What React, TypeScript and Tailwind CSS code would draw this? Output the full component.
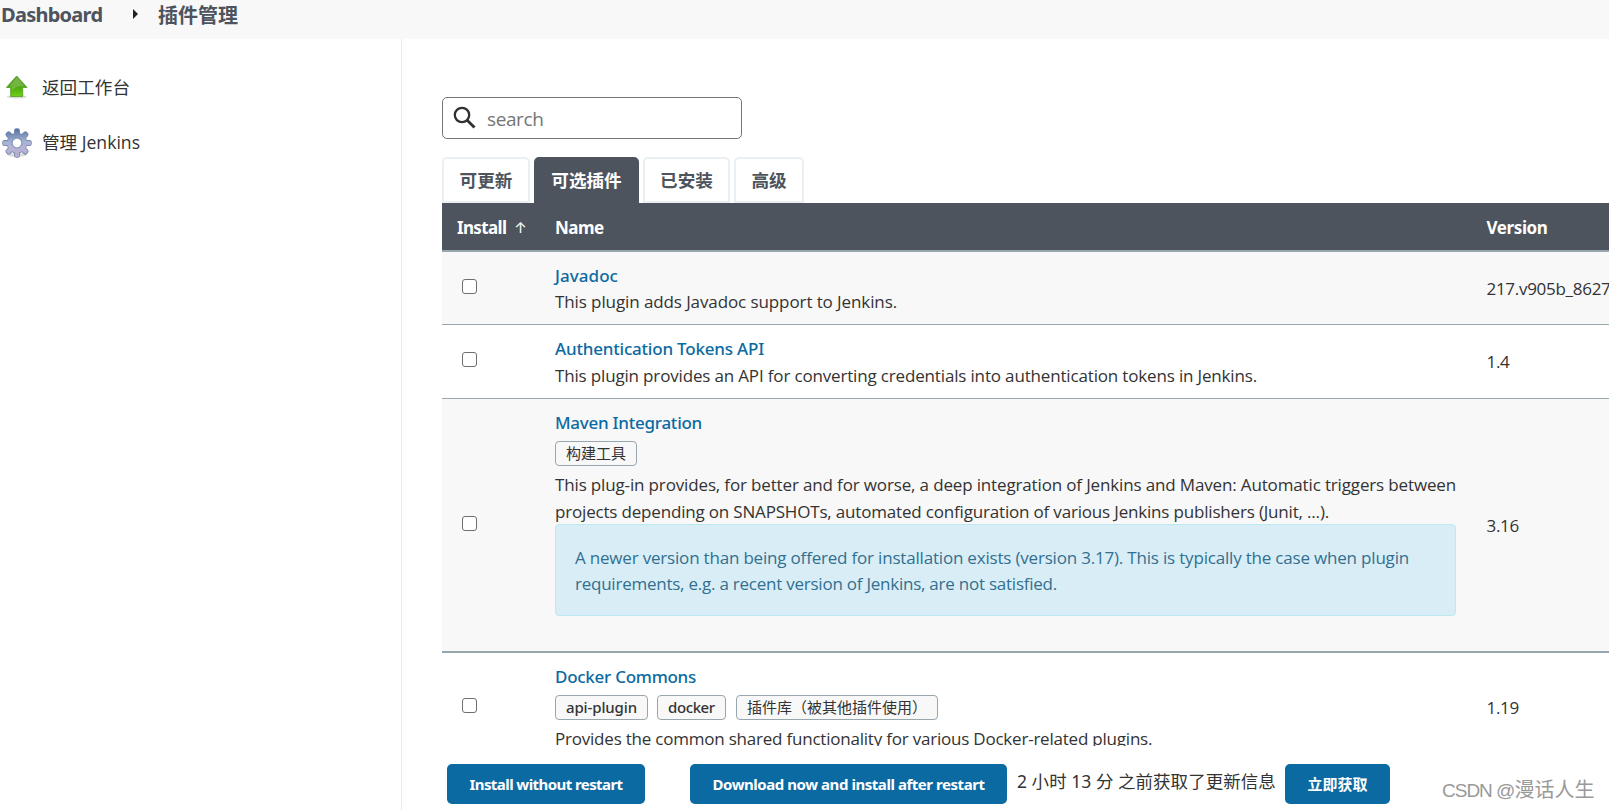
import type { ReactNode } from 'react';

interface Plugin {
  name: string;
  nameClass: string;
  rowClass: string;
  version: string;
  labels?: { text: string; className: string }[];
  description: ReactNode;
  notice?: ReactNode;
}

const tabs = [
  { label: '可更新', className: 'w-[88px]' },
  { label: '可选插件', className: 'w-[105px]', active: true },
  { label: '已安装', className: 'w-[87px]' },
  { label: '高级', className: 'w-[70px]' },
];

const plugins: Plugin[] = [
  {
    name: 'Javadoc',
    nameClass: 'tracking-[0.05px]',
    rowClass: 'h-[73px] border-b bg-[#f8f8f8]',
    version: '217.v905b_8627',
    description: (
      <p className="tracking-[-0.1px]">This plugin adds Javadoc support to Jenkins.</p>
    ),
  },
  {
    name: 'Authentication Tokens API',
    nameClass: 'tracking-[-0.2px] mb-px',
    rowClass: 'h-[74px] border-b bg-white',
    version: '1.4',
    description: (
      <p className="tracking-[-0.163px]">
        This plugin provides an API for converting credentials into authentication tokens in Jenkins.
      </p>
    ),
  },
  {
    name: 'Maven Integration',
    nameClass: 'tracking-[-0.255px]',
    rowClass: 'h-[254px] border-b-2 bg-[#f8f8f8]',
    version: '3.16',
    labels: [{ text: '构建工具', className: 'w-[82px] font-normal' }],
    description: (
      <>
        <p className="tracking-[-0.149px]">
          This plug-in provides, for better and for worse, a deep integration of Jenkins and Maven: Automatic triggers between
        </p>
        <p className="mt-px tracking-[-0.18px]">
          projects depending on SNAPSHOTs, automated configuration of various Jenkins publishers (Junit, ...).
        </p>
      </>
    ),
    notice: (
      <>
        <p className="tracking-[-0.192px]">
          A newer version than being offered for installation exists (version 3.17). This is typically the case when plugin
        </p>
        <p className="tracking-[-0.238px]">
          requirements, e.g. a recent version of Jenkins, are not satisfied.
        </p>
      </>
    ),
  },
  {
    name: 'Docker Commons',
    nameClass: 'tracking-[-0.266px]',
    rowClass: 'h-[109px] bg-white',
    version: '1.19',
    labels: [
      { text: 'api-plugin', className: 'w-[93px] font-medium tracking-[-0.13px]' },
      { text: 'docker', className: 'w-[69px] font-medium tracking-[-0.4px]' },
      { text: '插件库（被其他插件使用）', className: 'ml-px w-[202px] font-normal' },
    ],
    description: (
      <p className="tracking-[-0.215px]">
        Provides the common shared functionality for various Docker-related plugins.
      </p>
    ),
  },
];

function UpIcon() {
  return (
    <svg width="24" height="24" viewBox="0 0 24 24">
      <defs>
        <linearGradient id="up" x1="0" y1="0" x2="0" y2="1">
          <stop offset="0" stopColor="#5f9e2c" />
          <stop offset="0.5" stopColor="#4ca30c" />
          <stop offset="1" stopColor="#6fd013" />
        </linearGradient>
      </defs>
      <ellipse cx="11.7" cy="21.8" rx="10" ry="1.8" fill="#000" opacity="0.14" />
      <path
        d="M11.7 1 22 12.5H17.7V21.5H5.7V12.5H1.4Z"
        fill="url(#up)"
        stroke="#5fa832"
        strokeWidth="1"
        strokeLinejoin="round"
      />
      <path d="M11.7 2.6 20 11.5C14 10.5 10 12 7 15V11.5H4Z" fill="#fff" opacity="0.2" />
    </svg>
  );
}

// Teeth are drawn twice: a darker outline first, then the filled body on top
function GearIcon() {
  const teeth = [0, 45, 90, 135];
  return (
    <svg width="32" height="32" viewBox="0 0 32 32">
      <defs>
        <linearGradient id="gear" gradientUnits="userSpaceOnUse" x1="16" y1="2" x2="18" y2="30">
          <stop offset="0" stopColor="#5672a3" />
          <stop offset="0.45" stopColor="#a3b3d2" />
          <stop offset="0.65" stopColor="#b7b5d6" />
          <stop offset="1" stopColor="#b5acd2" />
        </linearGradient>
        <mask id="hole">
          <rect width="32" height="32" fill="#fff" />
          <circle cx="16" cy="16" r="4.2" fill="#000" />
        </mask>
        <clipPath id="teeth">
          <circle cx="16" cy="16" r="9.6" />
          {teeth.map((angle) => (
            <rect
              key={angle}
              x="13.8"
              y="2"
              width="4.4"
              height="28"
              rx="1.6"
              transform={`rotate(${angle} 16 16)`}
            />
          ))}
        </clipPath>
      </defs>
      <ellipse cx="16" cy="27.6" rx="10" ry="2.4" fill="#000" opacity="0.14" />
      <g mask="url(#hole)">
        <g fill="#7080a6">
          <circle cx="16" cy="16" r="10.3" />
          {teeth.map((angle) => (
            <rect
              key={angle}
              x="13.1"
              y="1.3"
              width="5.8"
              height="29.4"
              rx="2.2"
              transform={`rotate(${angle} 16 16)`}
            />
          ))}
        </g>
        <rect width="32" height="32" fill="url(#gear)" clipPath="url(#teeth)" />
        <circle cx="16" cy="16" r="5.1" fill="none" stroke="#8592b8" strokeWidth="1" />
      </g>
    </svg>
  );
}

function SearchIcon() {
  return (
    <svg width="24" height="24" viewBox="0 0 24 24" fill="none" stroke="#303030">
      <circle cx="9" cy="9" r="7.2" strokeWidth="2.3" />
      <path d="m14.2 14.2 7.3 7.3" strokeWidth="2.8" />
    </svg>
  );
}

function PluginRow({ plugin }: { plugin: Plugin }) {
  return (
    <div
      className={`grid shrink-0 grid-cols-[113px_931.5px_1fr] border-[#98a6ae] ${plugin.rowClass}`}
    >
      <div className="flex items-center pb-1 pl-5">
        <input
          type="checkbox"
          className="size-[15px] appearance-none rounded-[3px] border border-[#6f6f6f] bg-white"
        />
      </div>
      <div className="pt-[11px]">
        <a
          href="#"
          className={`block font-['Noto_Sans',sans-serif] font-medium text-[#0b6aa2] ${plugin.nameClass}`}
        >
          {plugin.name}
        </a>
        {plugin.labels && (
          <div className="mt-[5px] mb-1.5 flex gap-[9px]">
            {plugin.labels.map((label) => (
              <span
                key={label.text}
                className={`h-[25px] overflow-hidden rounded-[4px] border border-[#98a6ae] bg-[#f8f8f8] pl-2.5 font-['Noto_Sans','Noto_Sans_CJK_SC',sans-serif] text-[15px] leading-[23px] whitespace-nowrap ${label.className}`}
              >
                {label.text}
              </span>
            ))}
          </div>
        )}
        <div className="whitespace-nowrap">{plugin.description}</div>
        {plugin.notice && (
          <div className="-mt-px h-[92px] w-[901px] rounded-[4px] border border-[#bce8f1] bg-[#d9edf7] px-[19px] pt-5 whitespace-nowrap text-[#31708f]">
            {plugin.notice}
          </div>
        )}
      </div>
      <div className="flex items-center pt-px tracking-[-0.286px] whitespace-nowrap">
        {plugin.version}
      </div>
    </div>
  );
}

export default function App() {
  return (
    <div className="flex h-[810px] w-[1609px] flex-col overflow-hidden bg-white font-['Open_Sans','Noto_Sans_CJK_SC',sans-serif] text-[17px] leading-[26px] text-[#333]">
      {/* Breadcrumbs */}
      <header className="flex h-[39px] shrink-0 items-start bg-[#f8f8f8] pl-px text-[20px] leading-[30px] font-bold text-[#4d545d]">
        <span className="w-[132px] font-['Noto_Sans',sans-serif] tracking-[-0.74px]">Dashboard</span>
        <svg width="5" height="10" viewBox="0 0 5 10" className="mt-[9px] mr-5">
          <path d="M0 0 5 5 0 10Z" fill="#222" />
        </svg>
        <span className="pt-px">插件管理</span>
      </header>

      <div className="flex min-h-0 flex-1">
        {/* Sidebar */}
        <nav className="w-[402px] shrink-0 border-r border-[#eaeaea] pt-[33px]">
          <a href="#" className="flex h-[30px] items-center text-[17.6px]">
            <span className="flex w-[42px] pl-[5px]">
              <UpIcon />
            </span>
            返回工作台
          </a>
          <a href="#" className="mt-6 flex h-[32px] items-center text-[17.6px]">
            <span className="flex w-[42px] pt-px pl-px">
              <GearIcon />
            </span>
            管理 Jenkins
          </a>
        </nav>

        <main className="flex min-w-0 flex-1 flex-col">
          <div className="flex h-[707px] shrink-0 flex-col overflow-hidden pt-[58px] pl-10">
            <label className="flex h-[42px] w-[300px] shrink-0 items-center rounded-[5px] border border-[#757575] pl-2.5">
              <SearchIcon />
              <input
                placeholder="search"
                className="ml-2.5 w-[240px] pt-0.5 text-[19px] tracking-[-0.4px] placeholder:text-[#757575]"
              />
            </label>

            {/* Tabs */}
            <div className="mt-[18px] flex h-[46px] shrink-0 gap-1 text-center text-[17.6px] leading-[42px] font-bold">
              {tabs.map((tab) => (
                <a
                  key={tab.label}
                  href="#"
                  className={`rounded-t-[5px] border-2 ${tab.className} ${
                    tab.active
                      ? 'border-[#4d545d] bg-[#4d545d] text-white'
                      : 'border-[#e9eff3] text-[#4d545d]'
                  }`}
                >
                  {tab.label}
                </a>
              ))}
            </div>

            {/* Plugin table */}
            <div className="grid h-[49px] shrink-0 grid-cols-[113px_931.5px_1fr] items-center border-b-2 border-[#98a6ae] bg-[#4d545d] pt-0.5 font-['Noto_Sans',sans-serif] font-bold text-white">
              <span className="flex pl-[15px] tracking-[-0.65px]">
                Install
                <span className="ml-2 font-['Inter',sans-serif] text-[15px] font-normal">↑</span>
              </span>
              <span className="tracking-[-0.5px]">Name</span>
              <span className="tracking-[-0.4px]">Version</span>
            </div>
            {plugins.map((plugin) => (
              <PluginRow key={plugin.name} plugin={plugin} />
            ))}
          </div>

          {/* Actions */}
          <div className="flex items-start pt-[18px] pl-[45px] font-['Noto_Sans','Noto_Sans_CJK_SC',sans-serif] whitespace-nowrap">
            <button className="h-10 w-[198px] rounded-[5px] bg-[#0b6aa2] text-[15px] font-bold tracking-[-0.57px] text-white">
              Install without restart
            </button>
            <button className="ml-[45px] h-10 w-[317px] rounded-[5px] bg-[#0b6aa2] text-[15px] font-bold tracking-[-0.45px] text-white">
              Download now and install after restart
            </button>
            <span className="ml-2.5 w-[268px] pt-1 text-[17.5px] tracking-[0.03px]">
              2 小时 13 分 之前获取了更新信息
            </span>
            <button className="h-10 w-[105px] rounded-[5px] bg-[#0b6aa2] text-[15px] font-bold text-white">
              立即获取
            </button>
            <span className="ml-[52px] pt-[13px] font-['Liberation_Sans','Noto_Sans_CJK_SC',sans-serif] text-[20px] leading-[26px] text-[#999]">
              <span className="text-[19px] tracking-[-1px]">CSDN @</span>
              漫话人生
            </span>
          </div>
        </main>
      </div>
    </div>
  );
}
